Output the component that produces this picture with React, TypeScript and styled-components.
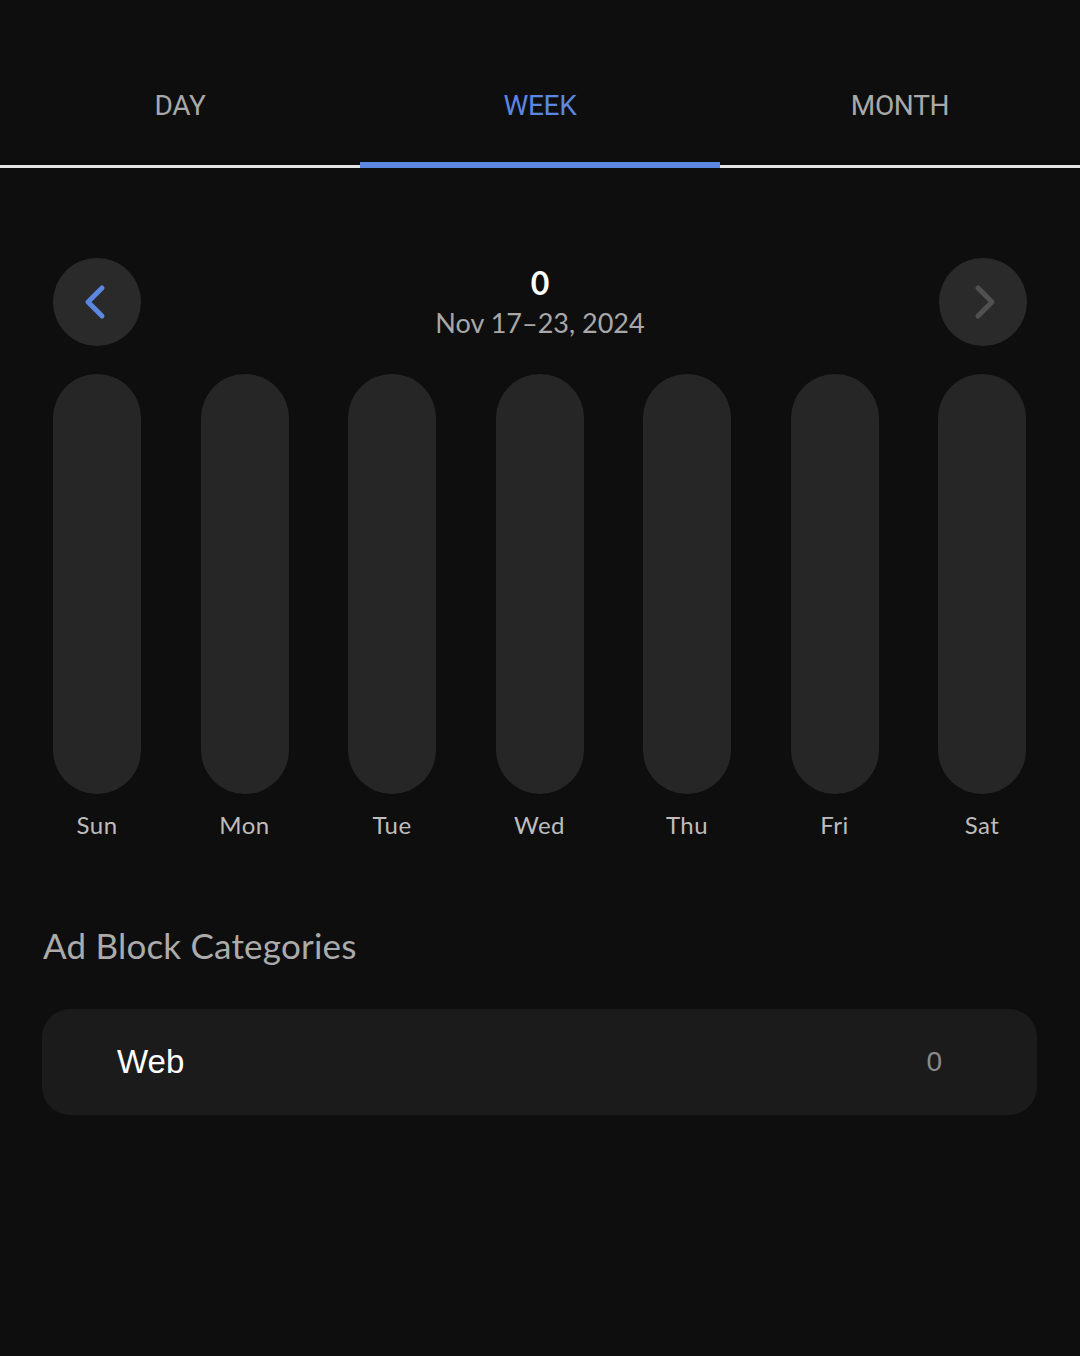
import React from "react";
import styled, { createGlobalStyle } from "styled-components";

const Global = createGlobalStyle`
  html, body { margin: 0; padding: 0; background: #0e0e0f; }
  body { font-family: Lato, "Noto Sans", sans-serif; }
  #root { min-height: 1356px; background: #0e0e0f; }
`;

const Page = styled.div`
  width: 1080px;
  min-height: 1356px;
  background: #0e0e0f;
  padding-top: 60px;
  box-sizing: border-box;
`;

const Tabs = styled.div`
  display: flex;
  border-bottom: 3px solid #e4e4e4;
  height: 108px;
  box-sizing: border-box;
`;

const Tab = styled.div<{ $active?: boolean }>`
  flex: 1;
  display: flex;
  align-items: flex-start;
  justify-content: center;
  padding-top: 29px;
  font-family: Roboto, sans-serif;
  font-size: 28px;
  line-height: 34px;
  letter-spacing: -0.3px;
  color: ${(p) => (p.$active ? "#5b87e0" : "#a9a9a9")};
  position: relative;
  &::after {
    content: "";
    display: ${(p) => (p.$active ? "block" : "none")};
    position: absolute;
    left: 0;
    right: 0;
    bottom: -3px;
    height: 6px;
    background: #5b87e0;
  }
`;

const Nav = styled.div`
  display: flex;
  align-items: center;
  justify-content: space-between;
  padding: 90px 53px 0 53px;
`;

const CircleBtn = styled.div`
  width: 88px;
  height: 88px;
  border-radius: 50%;
  background: #2a2a2b;
  display: flex;
  align-items: center;
  justify-content: center;
`;

const Center = styled.div`
  display: flex;
  flex-direction: column;
  align-items: center;
  margin-top: 2px;
`;

const Total = styled.div`
  color: #ffffff;
  font-size: 32px;
  font-weight: 700;
  line-height: 36px;
`;

const DateText = styled.div`
  color: #a8a8a8;
  font-size: 27px;
  line-height: 36px;
  margin-top: 4px;
`;

const Bars = styled.div`
  display: flex;
  justify-content: space-between;
  padding: 28px 54px 0 53px;
`;

const BarCol = styled.div`
  display: flex;
  flex-direction: column;
  align-items: center;
  width: 88px;
`;

const Bar = styled.div`
  width: 88px;
  height: 420px;
  border-radius: 44px;
  background: #262626;
`;

const DayLabel = styled.div`
  margin-top: 16px;
  color: #bdbdbd;
  font-size: 24px;
  line-height: 30px;
  white-space: nowrap;
  letter-spacing: 0.5px;
`;

const SectionTitle = styled.div`
  margin: 85px 0 0 43px;
  color: #ababab;
  font-size: 35px;
  line-height: 40px;
  letter-spacing: 0.2px;
`;

const Card = styled.div`
  margin: 44px 43px 0 42px;
  height: 106px;
  border-radius: 28px;
  background: #1b1b1b;
  display: flex;
  align-items: center;
  justify-content: space-between;
  padding: 0 95px 0 75px;
`;

const CardLabel = styled.div`
  color: #ffffff;
  font-size: 33px;
  font-family: "Liberation Sans", Arial, sans-serif;
`;

const CardValue = styled.div`
  color: #8a8a8a;
  font-size: 28px;
  font-family: "Liberation Sans", Arial, sans-serif;
`;

const days = ["Sun", "Mon", "Tue", "Wed", "Thu", "Fri", "Sat"];

export default function App() {
  return (
    <Page>
      <Global />
      <Tabs>
        <Tab>DAY</Tab>
        <Tab $active>WEEK</Tab>
        <Tab>MONTH</Tab>
      </Tabs>
      <Nav>
        <CircleBtn>
          <svg width="44" height="44" viewBox="0 0 44 44">
            <path d="M27 8 L13 22 L27 36" fill="none" stroke="#5b87e0" strokeWidth="5" strokeLinecap="round" strokeLinejoin="round" />
          </svg>
        </CircleBtn>
        <Center>
          <Total>0</Total>
          <DateText>Nov 17–23, 2024</DateText>
        </Center>
        <CircleBtn>
          <svg width="44" height="44" viewBox="0 0 44 44">
            <path d="M17 8 L31 22 L17 36" fill="none" stroke="#505050" strokeWidth="5" strokeLinecap="round" strokeLinejoin="round" />
          </svg>
        </CircleBtn>
      </Nav>
      <Bars>
        {days.map((d) => (
          <BarCol key={d}>
            <Bar />
            <DayLabel>{d}</DayLabel>
          </BarCol>
        ))}
      </Bars>
      <SectionTitle>Ad Block Categories</SectionTitle>
      <Card>
        <CardLabel>Web</CardLabel>
        <CardValue>0</CardValue>
      </Card>
    </Page>
  );
}
